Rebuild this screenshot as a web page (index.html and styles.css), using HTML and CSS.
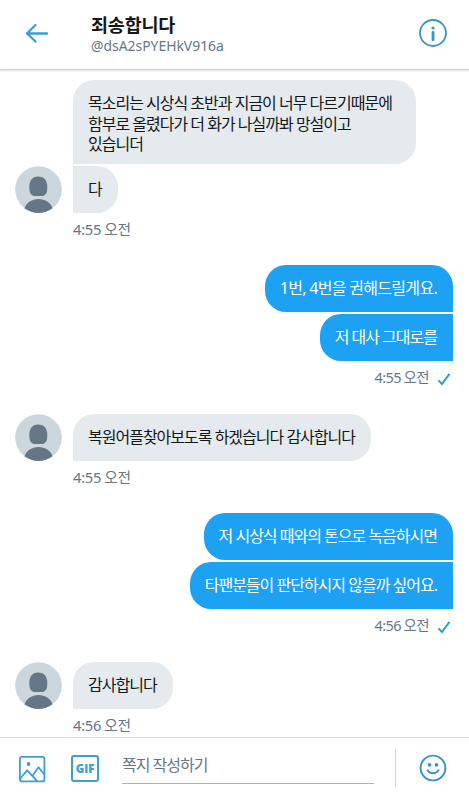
FILE: index.html
```html
<!DOCTYPE html>
<html lang="ko">
<head>
<meta charset="utf-8">
<title>죄송합니다</title>
<link rel="stylesheet" href="styles.css">
</head>
<body>
<svg class="defs" width="0" height="0">
  <symbol id="avatar" viewBox="0 0 47 47">
    <circle cx="23.5" cy="23.5" r="23.3" fill="#ccd6dd"/>
    <path d="M23.300 10.500c6.200 0 9 4.200 9 10.500 0 6.500-2 9-6 9h-6c-4 0-6-2.500-6-9 0-6.300 2.800-10.500 9-10.500Z" fill="#657786"/>
    <path d="M9.500 42.200C11.500 36.500 17 33 23.500 33s12 3.500 14 9.200a23.300 23.300 0 0 1-28 0Z" fill="#657786"/>
  </symbol>
  <symbol id="check" viewBox="0 0 14 14"><path d="M1.500 8.400 5 12 12.500 1.800" fill="none" stroke="#2b9bd8" stroke-width="2"/></symbol>
</svg>
<main class="app">
  <header class="header">
    <svg class="back" viewBox="0 0 24 20" fill="none" stroke="#3a9fd6" stroke-width="2.300" stroke-linecap="round" stroke-linejoin="round"><path d="M22 10.500H2M10.500 2 2 10.500l8.500 8"/></svg>
    <div class="who">
      <h1>죄송합니다</h1>
      <p>@dsA2sPYEHkV916a</p>
    </div>
    <svg class="info" viewBox="0 0 30 30"><circle cx="15" cy="15" r="13" fill="none" stroke="#3696c9" stroke-width="1.800"/><circle cx="15" cy="10" r="1.600" fill="#3696c9"/><rect x="13.600" y="13" width="2.800" height="10" rx="1" fill="#3696c9"/></svg>
  </header>
  <section class="messages">
    <div class="group in g1">
      <div class="bubble first long">목소리는 시상식 초반과 지금이 너무 다르기때문에<br>함부로 올렸다가 더 화가 나실까봐 망설이고<br>있습니더</div>
      <div class="row"><svg class="avatar"><use href="#avatar"/></svg><div class="bubble next">다</div></div>
      <div class="time">4:55 오전</div>
    </div>
    <div class="group out">
      <div class="bubble first numeric">1번, 4번을 권해드릴게요.</div>
      <div class="bubble next">저 대사 그대로를</div>
      <div class="time">4:55 오전<svg class="check"><use href="#check"/></svg></div>
    </div>
    <div class="group in g3">
      <div class="row"><svg class="avatar"><use href="#avatar"/></svg><div class="bubble first">복원어플찾아보도록 하겠습니다 감사합니다</div></div>
      <div class="time">4:55 오전</div>
    </div>
    <div class="group out">
      <div class="bubble first">저 시상식 때와의 톤으로 녹음하시면</div>
      <div class="bubble next">타팬분들이 판단하시지 않을까 싶어요.</div>
      <div class="time">4:56 오전<svg class="check"><use href="#check"/></svg></div>
    </div>
    <div class="group in">
      <div class="row"><svg class="avatar"><use href="#avatar"/></svg><div class="bubble first">감사합니다</div></div>
      <div class="time">4:56 오전</div>
    </div>
  </section>
  <footer class="composer">
    <svg class="photo" viewBox="0 0 28 28" fill="none" stroke="#3a9fd3" stroke-width="1.800" stroke-linejoin="round"><rect x="1.900" y="1.900" width="24.500" height="24.500" rx="2"/><path d="M2.300 23.500 9.200 15.300l9.800 10.500M14.700 20.500l5.800-8.300 5.800 7.600"/><circle cx="10.500" cy="9" r="1.900" fill="#3a9fd3" stroke="none"/></svg>
    <div class="gif">GIF</div>
    <div class="field">쪽지 작성하기</div>
    <div class="divider"></div>
    <svg class="smile" viewBox="0 0 28 28"><circle cx="14" cy="14" r="12.400" fill="none" stroke="#3696c9" stroke-width="1.900"/><circle cx="10.500" cy="10.800" r="1.900" fill="#3696c9"/><circle cx="17.500" cy="10.800" r="1.900" fill="#3696c9"/><path d="M8.500 16.300c2.300 4 8.700 4 11 0" fill="none" stroke="#3696c9" stroke-width="1.900" stroke-linecap="round"/></svg>
  </footer>
</main>
</body>
</html>
```
FILE: styles.css
```css
* { box-sizing: border-box; }
body {
  margin: 0;
  background: #fff;
  color: #14171a;
  font-family: "Noto Sans", "Noto Sans CJK KR", sans-serif;
}
.defs { display: block; }
.app { display: flex; flex-direction: column; height: 800px; overflow: hidden; }
.header {
  flex: none;
  display: flex;
  height: 70px;
  border-bottom: 1px solid #cfd1d3;
  box-shadow: 0 1px 2px rgba(0, 0, 0, .13);
}
.back { width: 24px; height: 20px; margin: 23px 0 0 25px; }
.who { margin: 13px auto 0 42px; }
h1 { margin: 0; font-size: 18.500px; letter-spacing: -.200px; line-height: 24px; font-weight: 700; }
.who p { margin: 0; font-size: 13.900px; line-height: 17px; color: #657786; }
.info { width: 30px; height: 30px; margin: 18px 21px 0 0; }
.messages { flex: none; height: 667px; padding: 10px 16px 0 73px; }
.group { display: flex; flex-direction: column; margin-bottom: 20px; }
.g1, .g3 { margin-bottom: 19px; }
.in { align-items: flex-start; }
.out { align-items: flex-end; }
.row { display: flex; margin-left: -58px; gap: 11px; }
.avatar { width: 47px; height: 47px; }
.bubble {
  height: 47px;
  padding: 0 16px 0 15px;
  font-size: 16px;
  letter-spacing: -1px;
  line-height: 47px;
  white-space: nowrap;
}
.in .bubble { background: #e4eaee; border-radius: 21px 21px 21px 0; }
.in .bubble.next { border-top-left-radius: 0; }
.in .bubble.long { width: 343px; height: 84px; padding-top: 13px; line-height: 20.500px; margin-bottom: 2px; border-bottom-left-radius: 0; }
.out .bubble { background: #1da1f2; color: #fff; border-radius: 21px 21px 0 21px; }
.out .bubble.numeric { letter-spacing: -.700px; }
.out .bubble.next { border-top-right-radius: 0; margin-top: 2px; }
.time {
  display: flex;
  align-items: center;
  height: 33px;
  font-size: 14.800px;
  letter-spacing: -.3px;
  word-spacing: -.500px;
  line-height: 33px;
  color: #657786;
}
.out .time { font-size: 14.500px; letter-spacing: -.600px; line-height: 31px; height: 32px; margin-bottom: 1px; }
.check { width: 14px; height: 14px; margin: 4px 2px 0 8px; }
.composer {
  flex: none;
  display: flex;
  height: 63px;
  border-top: 1px solid #dce3e7;
}
.photo { width: 28px; height: 28px; margin: 17px 0 0 18px; }
.gif {
  width: 28px;
  height: 27px;
  margin: 17px 0 0 25px;
  border: 2px solid #3a9fd3;
  border-radius: 3px;
  color: #3a9fd3;
  font: 800 11.500px/23px "Open Sans", sans-serif;
  text-align: center;
}
.field {
  width: 252px;
  height: 46px;
  margin-left: 23px;
  border-bottom: 1px solid #aab5bb;
  font-size: 16px;
  letter-spacing: -1px;
  line-height: 54px;
  color: #657786;
}
.divider { width: 1px; height: 38px; margin: 11px 0 0 21px; background: #ccd3d7; }
.smile { width: 28px; height: 28px; margin: 16px 0 0 23px; }
```
